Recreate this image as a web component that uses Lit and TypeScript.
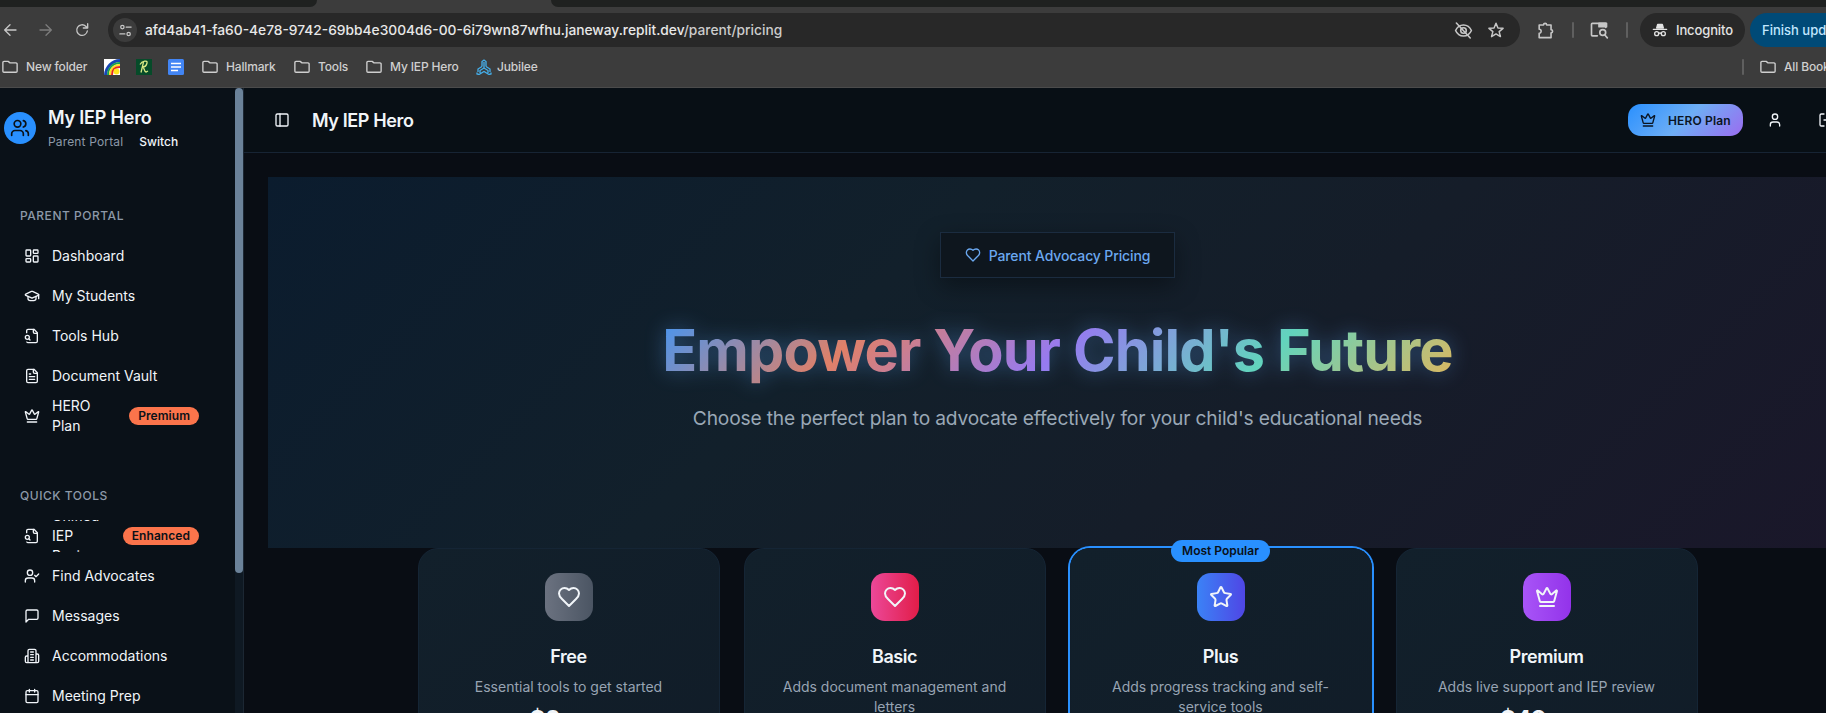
import { LitElement, html, css, svg } from "lit";
import { customElement } from "lit/decorators.js";

const paths: Record<string, any> = {
  users: svg`<path d="M16 21v-2a4 4 0 0 0-4-4H6a4 4 0 0 0-4 4v2"/><circle cx="9" cy="7" r="4"/><path d="M22 21v-2a4 4 0 0 0-3-3.87M16 3.13a4 4 0 0 1 0 7.75"/>`,
  dash: svg`<rect width="7" height="9" x="3" y="3" rx="1"/><rect width="7" height="5" x="14" y="3" rx="1"/><rect width="7" height="9" x="14" y="12" rx="1"/><rect width="7" height="5" x="3" y="16" rx="1"/>`,
  cap: svg`<path d="M21.42 10.922a1 1 0 0 0-.019-1.838L12.83 5.18a2 2 0 0 0-1.66 0L2.6 9.08a1 1 0 0 0 0 1.832l8.57 3.908a2 2 0 0 0 1.66 0z"/><path d="M22 10v6M6 12.5V16a6 3 0 0 0 12 0v-3.5"/>`,
  filesearch: svg`<path d="M14 2v4a2 2 0 0 0 2 2h4"/><path d="M4.268 21a2 2 0 0 0 1.727 1H18a2 2 0 0 0 2-2V7l-5-5H6a2 2 0 0 0-2 2v3"/><path d="m9 18-1.5-1.5"/><circle cx="5" cy="14" r="3"/>`,
  file: svg`<path d="M15 2H6a2 2 0 0 0-2 2v16a2 2 0 0 0 2 2h12a2 2 0 0 0 2-2V7Z"/><path d="M14 2v4a2 2 0 0 0 2 2h4M10 9H8M16 13H8M16 17H8"/>`,
  crown: svg`<path d="M11.562 3.266a.5.5 0 0 1 .876 0L15.39 8.87a1 1 0 0 0 1.516.294L21.183 5.5a.5.5 0 0 1 .798.519l-2.834 10.246a1 1 0 0 1-.956.734H5.81a1 1 0 0 1-.957-.734L2.02 6.02a.5.5 0 0 1 .798-.519l4.276 3.664a1 1 0 0 0 1.516-.294zM5 21h14"/>`,
  usercheck: svg`<path d="m16 11 2 2 4-4M16 21v-2a4 4 0 0 0-4-4H6a4 4 0 0 0-4 4v2"/><circle cx="9" cy="7" r="4"/>`,
  message: svg`<path d="M21 15a2 2 0 0 1-2 2H7l-4 4V5a2 2 0 0 1 2-2h14a2 2 0 0 1 2 2z"/>`,
  building: svg`<path d="M6 22V4a2 2 0 0 1 2-2h8a2 2 0 0 1 2 2v18ZM6 12H4a2 2 0 0 0-2 2v6a2 2 0 0 0 2 2h2M18 9h2a2 2 0 0 1 2 2v9a2 2 0 0 1-2 2h-2M10 6h4M10 10h4M10 14h4M10 18h4"/>`,
  calendar: svg`<path d="M8 2v4M16 2v4M3 10h18"/><rect width="18" height="18" x="3" y="4" rx="2"/>`,
  panel: svg`<rect width="18" height="18" x="3" y="3" rx="2"/><path d="M9 3v18"/>`,
  user: svg`<path d="M19 21v-2a4 4 0 0 0-4-4H9a4 4 0 0 0-4 4v2"/><circle cx="12" cy="7" r="4"/>`,
  logout: svg`<path d="M9 21H5a2 2 0 0 1-2-2V5a2 2 0 0 1 2-2h4M16 17l5-5-5-5M21 12H9"/>`,
  heart: svg`<path d="M19 14c1.49-1.46 3-3.21 3-5.5A5.5 5.5 0 0 0 16.5 3c-1.76 0-3 .5-4.5 2-1.5-1.5-2.74-2-4.5-2A5.5 5.5 0 0 0 2 8.5c0 2.3 1.5 4.05 3 5.5l7 7Z"/>`,
  star: svg`<path d="M11.525 2.295a.53.53 0 0 1 .95 0l2.31 4.679a2.123 2.123 0 0 0 1.595 1.16l5.166.756a.53.53 0 0 1 .294.904l-3.736 3.638a2.123 2.123 0 0 0-.611 1.878l.882 5.14a.53.53 0 0 1-.771.56l-4.618-2.428a2.122 2.122 0 0 0-1.973 0L6.396 21.01a.53.53 0 0 1-.77-.56l.881-5.139a2.122 2.122 0 0 0-.611-1.879L2.16 9.795a.53.53 0 0 1 .294-.906l5.165-.755a2.122 2.122 0 0 0 1.597-1.16z"/>`,
  back: svg`<path d="M21 12H4M12 4l-8 8 8 8"/>`,
  forward: svg`<path d="M3 12h17M12 4l8 8-8 8"/>`,
  reload: svg`<path d="M20 13.500a8 8 0 1 1-2.400-7.200L20 8.700M20.500 2.500v6.500h-6.500"/>`,
  tune: svg`<circle cx="7" cy="6.500" r="2.700"/><path d="M13 6.500h8M3 17.500h8"/><circle cx="17" cy="17.500" r="2.700"/>`,
  folder: svg`<path d="M2.500 5.500v12a1.500 1.500 0 0 0 1.500 1.500h16a1.500 1.500 0 0 0 1.500-1.500V8A1.500 1.500 0 0 0 20 6.500h-8L9.500 4.500H4A1.500 1.500 0 0 0 2.500 6z"/>`,
  eyeoff: svg`<path d="M2 12C4 7.500 7.500 5 12 5s8 2.500 10 7c-2 4.500-5.500 7-10 7S4 16.500 2 12z"/><circle cx="12" cy="12" r="3.500"/><path d="M3 2.500 20.500 21.500"/>`,
  bmstar: svg`<path d="m12 3 2.600 6.300 6.800.5-5.200 4.400 1.700 6.600-5.900-3.600-5.900 3.600 1.700-6.600-5.200-4.400 6.800-.5z"/>`,
  puzzle: svg`<path d="M4 5h5.500a2 2 0 0 1 4 0H19v6a2 2 0 0 1 0 4v6H4v-5.500a2.500 2.500 0 0 0 0-5z"/>`,
  lens: svg`<path d="M10 19H4a1 1 0 0 1-1-1V5a1 1 0 0 1 1-1h16v5"/><path d="M12 4h9v4h-9z" fill="currentColor"/><circle cx="16.500" cy="15" r="3.500"/><path d="m19 18 3 3.500"/>`,
  incog: svg`<path d="M7 9 8.500 3.500h7L17 9z" fill="currentColor"/><path d="M2 11h20"/><circle cx="7" cy="17.500" r="3"/><circle cx="17" cy="17.500" r="3"/><path d="M10 17q2-1 4 0"/>`,
};
const icon = (name: string, size = 16, width = 2) =>
  html`<svg width=${size} height=${size} viewBox="0 0 24 24" fill="none" stroke="currentColor" stroke-width=${width} stroke-linecap="round" stroke-linejoin="round">${paths[name]}</svg>`;

const base = css`
  * { box-sizing: border-box; }
  svg { display: block; flex: none; }
`;

@customElement("browser-bar")
class BrowserBar extends LitElement {
  static styles = [base, css`
    :host { display: block; height: 88px; background: #3c3c3c; border-bottom: 1px solid #4b4b4b; font: 500 13px Inter, sans-serif; color: #dedede; overflow: hidden; white-space: nowrap; }
    .tabs { display: flex; justify-content: space-between; height: 7px; }
    .tab { background: #1f2120; }
    .tab-left { width: 317px; border-bottom-right-radius: 8px; }
    .tab-right { width: 1275px; border-bottom-left-radius: 8px; }
    .tools { display: flex; align-items: center; height: 46px; color: #c7c7c7; }
    .tools > *, .marks > * { flex: none; }
    .nav { display: flex; width: 108px; gap: 20px; padding-left: 2px; align-items: center; }
    .dim { color: #7c7c7c; }
    .url { display: flex; align-items: center; width: 1412px; height: 34px; border-radius: 17px; background: #282828; padding: 0 15px 0 5px; }
    .site { display: grid; place-items: center; width: 24px; height: 24px; border-radius: 12px; background: #3c3c3c; margin-right: 8px; }
    .address { font-size: 13.78px; color: #e8e8e8; flex: 1; }
    .path { color: #cccccc; }
    .acts { display: flex; gap: 14px; }
    .ext { display: flex; align-items: center; width: 120px; padding-left: 16px; }
    .sep { width: 2px; height: 16px; background: #5f5f5f; border-radius: 1px; }
    .sep-a { margin: 0 15px 0 17px; }
    .sep-b { margin-left: 17px; }
    .incog { display: flex; align-items: center; gap: 8px; width: 105px; height: 34px; border-radius: 17px; background: #282828; color: #e3e3e3; padding-left: 12px; letter-spacing: -.12px; }
    .update { width: 160px; height: 34px; line-height: 34px; margin-left: 5px; border-radius: 17px; background: #004a77; color: #c2e7ff; padding-left: 12px; }
    .marks { display: flex; align-items: center; height: 27px; font-size: 12px; letter-spacing: -.15px; color: #cfcfcf; padding-left: 1px; }
    .mark { display: flex; align-items: center; gap: 7px; }
    .m1 { width: 103px; } .fav { width: 32px; } .m2 { width: 92px; margin-left: 1px; } .m3 { width: 72px; } .m4 { width: 111px; } .m5 { width: 66px; gap: 5px; }
    .spacer { width: 1200px; }
    .all { margin-left: 15px; }
  `];
  render() {
    return html`
      <div class="tabs"><div class="tab tab-left"></div><div class="tab tab-right"></div></div>
      <div class="tools">
        <div class="nav">${icon("back", 16)}<span class="dim">${icon("forward", 16)}</span>${icon("reload", 16)}</div>
        <div class="url"><div class="site">${icon("tune", 15)}</div>
          <div class="address">afd4ab41-fa60-4e78-9742-69bb4e3004d6-00-6i79wn87wfhu.janeway.replit.dev<span class="path">/parent/pricing</span></div>
          <div class="acts">${icon("eyeoff", 19)}${icon("bmstar", 18)}</div></div>
        <div class="ext">${icon("puzzle", 19)}<div class="sep sep-a"></div>${icon("lens", 20)}<div class="sep sep-b"></div></div>
        <div class="incog">${icon("incog", 16)}<span>Incognito</span></div>
        <div class="update">Finish update</div>
      </div>
      <div class="marks">
        <div class="mark m1">${icon("folder", 18, 1.8)}<span>New folder</span></div>
        <div class="fav"><svg width="16" height="16" viewBox="0 0 16 16"><path fill="#fff" d="M0 0h16v16H0z"/><g fill="none" stroke-width="2"><path stroke="#1746b5" stroke-width="3" d="M1.500 16C2 8 8 1.500 16 1.500"/><path stroke="#1aa14b" d="M4 16C4 9 9 4 16 4"/><path stroke="#ffdc21" d="M6 16c0-6 4-10 10-10"/><path stroke="#e42722" d="M8 16c0-5 3-8 8-8"/></g><circle cx="12.500" cy="12.500" r="3" fill="#ffe51b"/></svg></div>
        <div class="fav"><svg width="16" height="16" viewBox="0 0 16 16"><path fill="#064b29" d="M0 0h16v16H0z"/><path d="M7.500 3 5 13.500M4 5.500c2-4 8-4.500 7-1.500-.5 2.500-2.500 4-4.500 4 2 0 1.500 5 3.500 5l2-1" fill="none" stroke="#d9eb86" stroke-width="1.300"/></svg></div>
        <div class="fav"><svg width="16" height="16" viewBox="0 0 16 16"><rect width="16" height="16" rx="1.500" fill="#4285f4"/><path stroke="#fff" stroke-width="1.700" d="M3 4.500h10M3 8h10M3 11.500h7"/></svg></div>
        <div class="mark m2">${icon("folder", 18, 1.8)}<span>Hallmark</span></div>
        <div class="mark m3">${icon("folder", 18, 1.8)}<span>Tools</span></div>
        <div class="mark m4">${icon("folder", 18, 1.8)}<span>My IEP Hero</span></div>
        <div class="mark m5"><svg width="16" height="16" viewBox="0 0 16 16" fill="none" stroke="#45b0ec" stroke-width="1.300"><path d="M6 7.500V2.500L8 1l2 1.500v5M8 3v6M6 7.500 2 10v3M10 7.500l4 2.500v3M8 9l-4 2.500V14M8 9l4 2.500V14M1 13.500v1.500l2 .5 5-3 5 3 2-.5v-1.500"/></svg><span>Jubilee</span></div>
        <div class="spacer"></div><div class="sep"></div><div class="mark all">${icon("folder", 18, 1.8)}<span>All Bookmarks</span></div>
      </div>`;
  }
}

@customElement("side-nav")
class SideNav extends LitElement {
  static styles = [base, css`
    :host { display: flex; width: 244px; flex: none; background: #0a1118; border-right: 1px solid #1c2733; overflow: hidden; color: #f1f5f9; font-family: Inter, sans-serif; }
    .body { width: 235px; flex: none; }
    .brand { display: flex; gap: 12px; align-items: center; padding: 16px 0 0 4px; height: 63px; }
    .logo { display: grid; place-items: center; width: 32px; height: 32px; border-radius: 16px; background: #2990ff; color: #0a1118; }
    .name { font-size: 18px; line-height: 28px; font-weight: 600; letter-spacing: -.2px; }
    .portal { display: flex; gap: 16px; font-size: 12px; line-height: 20px; color: #8d99a8; letter-spacing: .16px; }
    .switch { color: #f1f5f9; font-weight: 500; letter-spacing: 0; }
    .label { font-size: 12px; font-weight: 500; letter-spacing: .52px; color: #8d99a8; height: 32px; line-height: 32px; padding-left: 20px; }
    .first { margin-top: 49px; margin-bottom: 8px; }
    .second { margin-top: 48px; margin-bottom: 8px; }
    .item { display: flex; align-items: center; gap: 12px; height: 32px; margin: 0 36px 8px 16px; padding-left: 8px; overflow: hidden; font-size: 14px; line-height: 20px; }
    .text { flex: none; }
    .narrow { width: 46px; }
    .badge { margin-left: auto; border-radius: 9px; height: 18px; line-height: 18px; padding: 0 9px; background: #fb744b; color: #0a1118; font-size: 12px; font-weight: 600; letter-spacing: .06px; }
    .rail { width: 8px; height: 100%; background: #0f1923; }
    .thumb { height: 485px; background: #6b8299; border-radius: 4px; }
  `];
  item(i: string, t: string, badge = "") {
    return html`<div class="item">${icon(i)}<span class="text ${badge ? "narrow" : ""}">${t}</span>${badge ? html`<span class="badge">${badge}</span>` : ""}</div>`;
  }
  render() {
    return html`<div class="body">
      <div class="brand"><div class="logo">${icon("users", 20)}</div><div><div class="name">My IEP Hero</div><div class="portal">Parent Portal <span class="switch">Switch</span></div></div></div>
      <div class="label first">PARENT PORTAL</div>
      ${this.item("dash", "Dashboard")}${this.item("cap", "My Students")}${this.item("filesearch", "Tools Hub")}${this.item("file", "Document Vault")}${this.item("crown", "HERO Plan", "Premium")}
      <div class="label second">QUICK TOOLS</div>
      ${this.item("filesearch", "Unified IEP Review", "Enhanced")}${this.item("usercheck", "Find Advocates")}${this.item("message", "Messages")}${this.item("building", "Accommodations")}${this.item("calendar", "Meeting Prep")}
    </div><div class="rail"><div class="thumb"></div></div>`;
  }
}

@customElement("plan-card")
class PlanCard extends LitElement {
  static properties = { plan: { attribute: false } };
  declare plan: any;
  static styles = [base, css`
    :host { display: block; }
    .card { position: relative; display: flex; flex-direction: column; align-items: center; height: 500px; border: 1px solid #152535; border-radius: 20px; padding: 24px; background: linear-gradient(145deg, #12202b, #101a26); color: #f1f5f9; text-align: center; }
    .popular { border-color: transparent; box-shadow: 0 0 0 2px #2990ff; }
    .flag { position: absolute; top: -9px; height: 22px; line-height: 22px; padding: 0 11.500px; border-radius: 11px; background: #2990ff; color: #0a1118; font-size: 12px; font-weight: 600; }
    .tile { display: grid; place-items: center; width: 48px; height: 48px; flex: none; border-radius: 14px; }
    .free { background: linear-gradient(90deg, #6b7280, #4b5563); }
    .basic { background: linear-gradient(90deg, #ec4899, #e11d48); }
    .plus { background: linear-gradient(90deg, #3b82f6, #4f46e5); }
    .premium { background: linear-gradient(90deg, #a855f7, #9333ea); }
    .title { margin-top: 22px; font-size: 18px; line-height: 28px; font-weight: 600; letter-spacing: -.45px; }
    .desc { margin-top: 6px; font-size: 14px; line-height: 20px; color: #98a4b3; width: 240px; }
    .price { margin-top: 7px; font-size: 24px; line-height: 32px; font-weight: 700; letter-spacing: -.4px; }
    .price small { font-size: 14px; font-weight: 400; letter-spacing: 0; color: #98a4b3; }
  `];
  render() {
    const p = this.plan;
    return html`<div class="card ${p.popular ? "popular" : ""}">
      ${p.popular ? html`<div class="flag">Most Popular</div>` : ""}
      <div class="tile ${p.kind}">${icon(p.icon, 24)}</div>
      <div class="title">${p.title}</div><div class="desc">${p.desc}</div>
      <div class="price">${p.price}<small>/month</small></div></div>`;
  }
}

@customElement("app-root")
class AppRoot extends LitElement {
  static styles = [base, css`
    :host { display: block; width: 1826px; height: 713px; overflow: hidden; background: #090d14; font-family: Inter, sans-serif; }
    .shell { display: flex; height: 625px; overflow: hidden; }
    .main { flex: none; width: 1627px; }
    .top { display: flex; align-items: center; height: 65px; border-bottom: 1px solid #172434; background: #080f15; color: #f1f5f9; padding-left: 30px; }
    .heading { font-size: 18px; font-weight: 600; margin-left: 22px; flex: 1; letter-spacing: -.38px; }
    .hero-btn { display: flex; align-items: center; gap: 12px; width: 115px; height: 32px; border-radius: 13px; padding-left: 12px; color: #0a1422; background: linear-gradient(135deg, #2990ff, #6eaef5 50%, #9b6cf0); font-size: 12px; font-weight: 600; letter-spacing: .15px; white-space: nowrap; }
    .account { margin-left: 24px; }
    .out { margin: 0 37px 0 35px; }
    .hero { margin: 24px 24px 0; height: 371px; padding-top: 55px; display: flex; flex-direction: column; align-items: center; background: linear-gradient(135deg, #0b1c2e 0%, #12202b 37%, #151d29 62%, #1a172a 100%); }
    .tag { display: flex; align-items: center; gap: 8px; height: 46px; border: 1px solid #1b2c40; background: #0e161e; box-shadow: 0 8px 24px rgba(0,0,0,.38); color: #6ba8f0; padding: 0 24px; font-size: 14px; font-weight: 500; letter-spacing: -.13px; }
    .headline { margin: 35px 0 0; font-size: 57.600px; line-height: 75px; font-weight: 700; letter-spacing: -.87px; color: transparent; background: linear-gradient(135deg, #4196f5 0%, #e08068 25%, #967af0 50%, #62d4bd 75%, #e2b65b 100%); background-clip: text; -webkit-background-clip: text; filter: drop-shadow(0 0 10px rgba(85,155,230,.42)); white-space: nowrap; }
    .sub { margin-top: 14px; font-size: 19.200px; line-height: 32px; letter-spacing: -.17px; color: #9aa8b6; white-space: nowrap; }
    .plans { display: grid; grid-template-columns: repeat(4, 302px); gap: 24px; justify-content: center; }
  `];
  plans = [
    { kind: "free", icon: "heart", title: "Free", desc: "Essential tools to get started", price: "$0" },
    { kind: "basic", icon: "heart", title: "Basic", desc: "Adds document management and letters", price: "$10" },
    { kind: "plus", icon: "star", title: "Plus", desc: "Adds progress tracking and self-service tools", price: "$25", popular: true },
    { kind: "premium", icon: "crown", title: "Premium", desc: "Adds live support and IEP review", price: "$49" },
  ];
  render() {
    return html`<browser-bar></browser-bar>
      <div class="shell"><side-nav></side-nav><div class="main">
        <div class="top">${icon("panel")}<div class="heading">My IEP Hero</div>
          <div class="hero-btn">${icon("crown")}<span>HERO Plan</span></div>
          <div class="account">${icon("user")}</div><div class="out">${icon("logout")}</div></div>
        <div class="hero"><div class="tag">${icon("heart")}<span>Parent Advocacy Pricing</span></div>
          <h1 class="headline">Empower Your Child's Future</h1>
          <div class="sub">Choose the perfect plan to advocate effectively for your child's educational needs</div></div>
        <div class="plans">${this.plans.map((p) => html`<plan-card .plan=${p}></plan-card>`)}</div>
      </div></div>`;
  }
}
